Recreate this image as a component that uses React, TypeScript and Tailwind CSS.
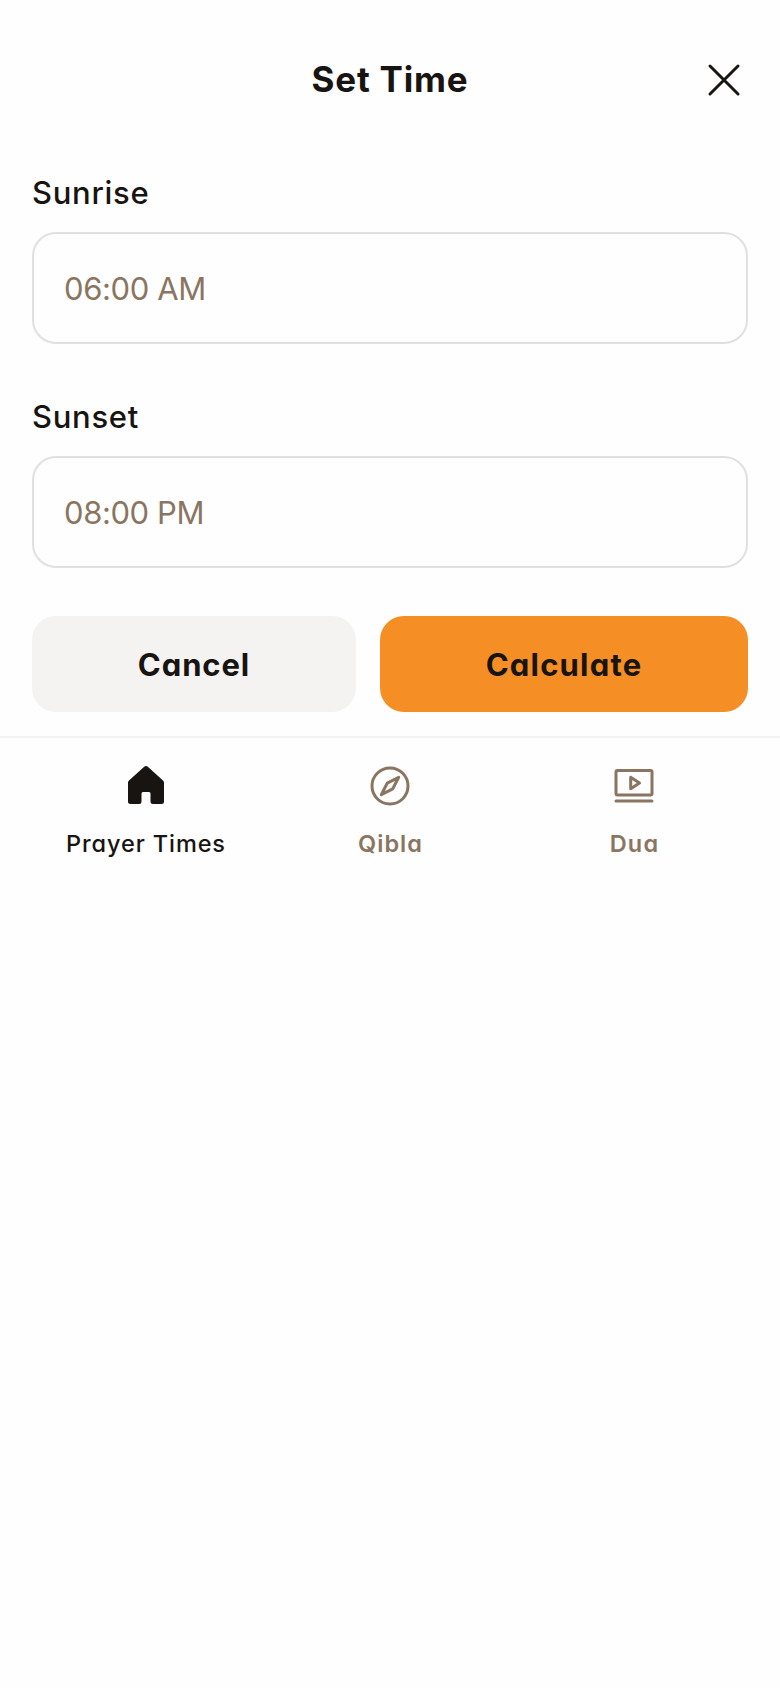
import React from "react";

function Field({ id, label, value }: { id: string; label: string; value: string }) {
  return (
    <div className="flex h-[224px] flex-col px-8 pt-[9px]">
      <label htmlFor={id} className="h-12 text-[31px] leading-[48px] font-medium tracking-[0.7px] text-[#181411]">
        {label}
      </label>
      <input
        id={id}
        defaultValue={value}
        className="mt-[15px] h-28 w-full rounded-3xl border-2 border-[#e0e0e0] bg-transparent px-[30px] text-[31px] tracking-[-0.4px] text-[#897561] outline-none"
      />
    </div>
  );
}

function HouseIcon() {
  return (
    <svg viewBox="0 0 48 48" className="size-12" fill="currentColor">
      <path d="M25.800 4.700 41 18.400A3 3 0 0 1 42 20.600V39.500a2.500 2.500 0 0 1-2.500 2.500H31a2.500 2.500 0 0 1-2.500-2.500V31.500a1.500 1.500 0 0 0-1.500-1.500h-6a1.500 1.500 0 0 0-1.500 1.500V39.500a2.500 2.500 0 0 1-2.500 2.500H8.500a2.500 2.500 0 0 1-2.500-2.500V20.600a3 3 0 0 1 1-2.200L22.200 4.700a2.700 2.700 0 0 1 3.600 0Z" />
    </svg>
  );
}

function CompassIcon() {
  return (
    <svg viewBox="0 0 48 48" className="size-12" fill="none" stroke="currentColor" strokeWidth="3" strokeLinejoin="round">
      <circle cx="24" cy="24" r="18" />
      <path d="M32.700 15.300 21.200 21.200 15.300 32.700 26.800 26.800Z" />
    </svg>
  );
}

function VideoIcon() {
  return (
    <svg viewBox="0 0 48 48" className="size-12" fill="none" stroke="currentColor" strokeWidth="3" strokeLinejoin="round" strokeLinecap="round">
      <rect x="6" y="8.500" width="36" height="24.500" rx="1.500" />
      <path d="M20.700 15.300v11.400l8.800-5.700ZM6 39h36" />
    </svg>
  );
}

export default function App() {
  return (
    <main className="min-h-[1688px] w-[780px] bg-[#fefefe] font-['Inter',sans-serif] text-[#181411] [font-feature-settings:'cv11']">
      <header className="flex h-40 items-center px-8">
        <h1 className="flex-1 pb-0.5 pl-24 text-center text-[35px] font-bold tracking-[0.8px]">Set Time</h1>
        <button aria-label="Close" className="flex h-24 w-24 items-center justify-end">
          <svg viewBox="0 0 48 48" className="size-12" fill="none" stroke="currentColor" strokeWidth="3" strokeLinecap="round">
            <path d="m10 10 28 28M38 10 10 38" />
          </svg>
        </button>
      </header>
      <Field id="sunrise" label="Sunrise" value="06:00 AM" />
      <Field id="sunset" label="Sunset" value="08:00 PM" />
      <div className="flex gap-6 px-8 py-2 text-[31px] font-bold">
        <button className="h-24 w-[324px] rounded-3xl bg-[#f4f3f1] pt-0.5 tracking-[0.9px]">Cancel</button>
        <button className="h-24 flex-1 rounded-3xl bg-[#f48e25] pt-0.5 tracking-[1.2px]">Calculate</button>
      </div>
      <nav className="mt-4 flex gap-4 border-t-2 border-[#f4f3f1] px-8 pt-6 text-[23.5px] leading-9 font-medium tracking-[0.9px] text-[#897561]">
        <a className="flex flex-1 flex-col items-center gap-4 text-[#181411]">
          <HouseIcon />
          <span>Prayer Times</span>
        </a>
        <a className="flex flex-1 flex-col items-center gap-4">
          <CompassIcon />
          <span className="pl-px font-semibold tracking-[1px]">Qibla</span>
        </a>
        <a className="flex flex-1 flex-col items-center gap-4">
          <VideoIcon />
          <span className="pl-px font-semibold tracking-[1.2px]">Dua</span>
        </a>
      </nav>
    </main>
  );
}
